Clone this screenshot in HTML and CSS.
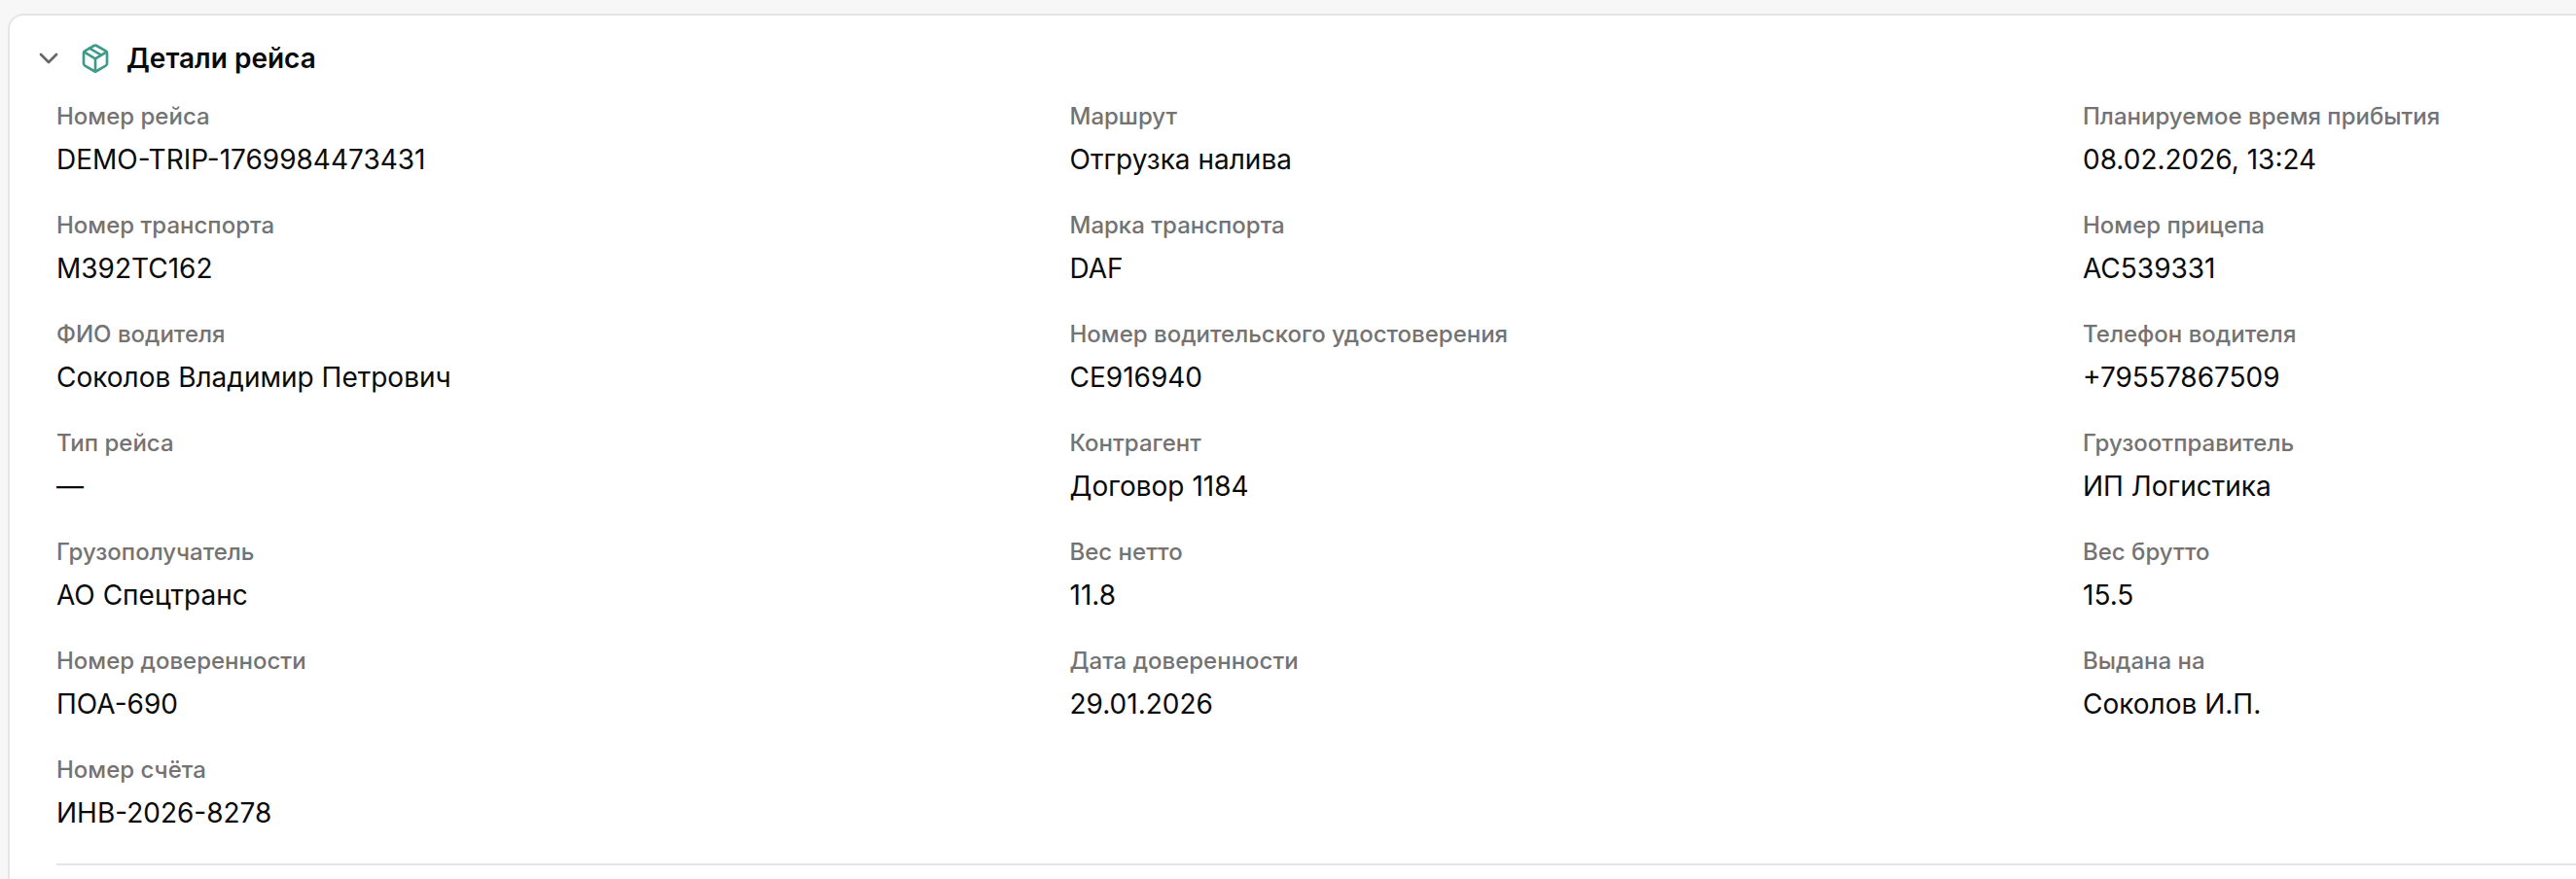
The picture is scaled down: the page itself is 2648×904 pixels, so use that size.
FILE: index.html
```html
<!DOCTYPE html>
<html lang="ru">
<head>
    <meta charset="utf-8">
    <title>Детали рейса</title>
    <link rel="stylesheet" href="styles.css">
</head>
<body>
    <section class="card">
        <header class="card-head">
            <svg class="chevron" viewBox="0 0 24 24" fill="none" stroke="currentColor" stroke-width="2" stroke-linecap="round" stroke-linejoin="round"><path d="M6 9l6 6 6-6"/></svg>
            <svg class="box" viewBox="0 0 24 24" fill="none" stroke="currentColor" stroke-width="2" stroke-linecap="round" stroke-linejoin="round"><path d="M11 21.73a2 2 0 0 0 2 0l7-4A2 2 0 0 0 21 16V8a2 2 0 0 0-1-1.73l-7-4a2 2 0 0 0-2 0l-7 4A2 2 0 0 0 3 8v8a2 2 0 0 0 1 1.73z"/><path d="M12 22V12"/><path d="M3.3 7l7.7 4.73a2 2 0 0 0 2 0L20.7 7"/><path d="M7.5 4.27l9 5.15"/></svg>
            <h2>Детали рейса</h2>
        </header>
        <div class="details">
            <div class="field"><div class="label">Номер рейса</div><div class="value">DEMO-TRIP-1769984473431</div></div>
            <div class="field"><div class="label">Маршрут</div><div class="value">Отгрузка налива</div></div>
            <div class="field"><div class="label">Планируемое время прибытия</div><div class="value">08.02.2026, 13:24</div></div>

            <div class="field"><div class="label">Номер транспорта</div><div class="value">М392ТС162</div></div>
            <div class="field"><div class="label">Марка транспорта</div><div class="value">DAF</div></div>
            <div class="field"><div class="label">Номер прицепа</div><div class="value">АС539331</div></div>

            <div class="field"><div class="label">ФИО водителя</div><div class="value">Соколов Владимир Петрович</div></div>
            <div class="field"><div class="label">Номер водительского удостоверения</div><div class="value">СЕ916940</div></div>
            <div class="field"><div class="label">Телефон водителя</div><div class="value">+79557867509</div></div>

            <div class="field"><div class="label">Тип рейса</div><div class="value">—</div></div>
            <div class="field"><div class="label">Контрагент</div><div class="value">Договор 1184</div></div>
            <div class="field"><div class="label">Грузоотправитель</div><div class="value">ИП Логистика</div></div>

            <div class="field"><div class="label">Грузополучатель</div><div class="value">АО Спецтранс</div></div>
            <div class="field"><div class="label">Вес нетто</div><div class="value">11.8</div></div>
            <div class="field"><div class="label">Вес брутто</div><div class="value">15.5</div></div>

            <div class="field"><div class="label">Номер доверенности</div><div class="value">ПОА-690</div></div>
            <div class="field"><div class="label">Дата доверенности</div><div class="value">29.01.2026</div></div>
            <div class="field"><div class="label">Выдана на</div><div class="value">Соколов И.П.</div></div>

            <div class="field"><div class="label">Номер счёта</div><div class="value">ИНВ-2026-8278</div></div>
        </div>
        <hr class="divider">
    </section>
</body>
</html>
```

FILE: styles.css
```css
html, body {
    height: 100%;
}
body {
    margin: 0;
    padding: 14px 0 0 8px;
    box-sizing: border-box;
    display: flex;
    background-color: #f7f7f7;
    font-family: Inter, "Liberation Sans", sans-serif;
    color: #0a0a0a;
}
/* the card runs off the right and bottom of the window, so no border there */
.card {
    flex: 1;
    min-width: 0;
    box-sizing: border-box;
    background-color: #fff;
    border: 2px solid #e5e5e5;
    border-right: 0;
    border-bottom: 0;
    border-top-left-radius: 16px;
    padding-left: 48px;
}
.card-head {
    display: flex;
    align-items: center;
    gap: 16px;
    height: 88px;
    margin-left: -24px;
}
.chevron {
    width: 32px;
    height: 32px;
    color: #666;
}
.box {
    width: 32px;
    height: 32px;
    color: #3f9a8a;
}
.card-head h2 {
    margin: 0;
    font-size: 28px;
    line-height: 36px;
    font-weight: 600;
}
.details {
    display: grid;
    grid-template-columns: 1009.5px 1009.5px 1fr;
    column-gap: 32px;
    row-gap: 32px;
}
.field {
    display: flex;
    flex-direction: column;
    gap: 8px;
}
.label {
    font-size: 24px;
    line-height: 32px;
    font-weight: 500;
    color: #737373;
}
.value {
    font-size: 28px;
    line-height: 40px;
}
.divider {
    margin: 32px 0 0;
    border: 0;
    border-top: 2px solid #e5e5e5;
}
```
